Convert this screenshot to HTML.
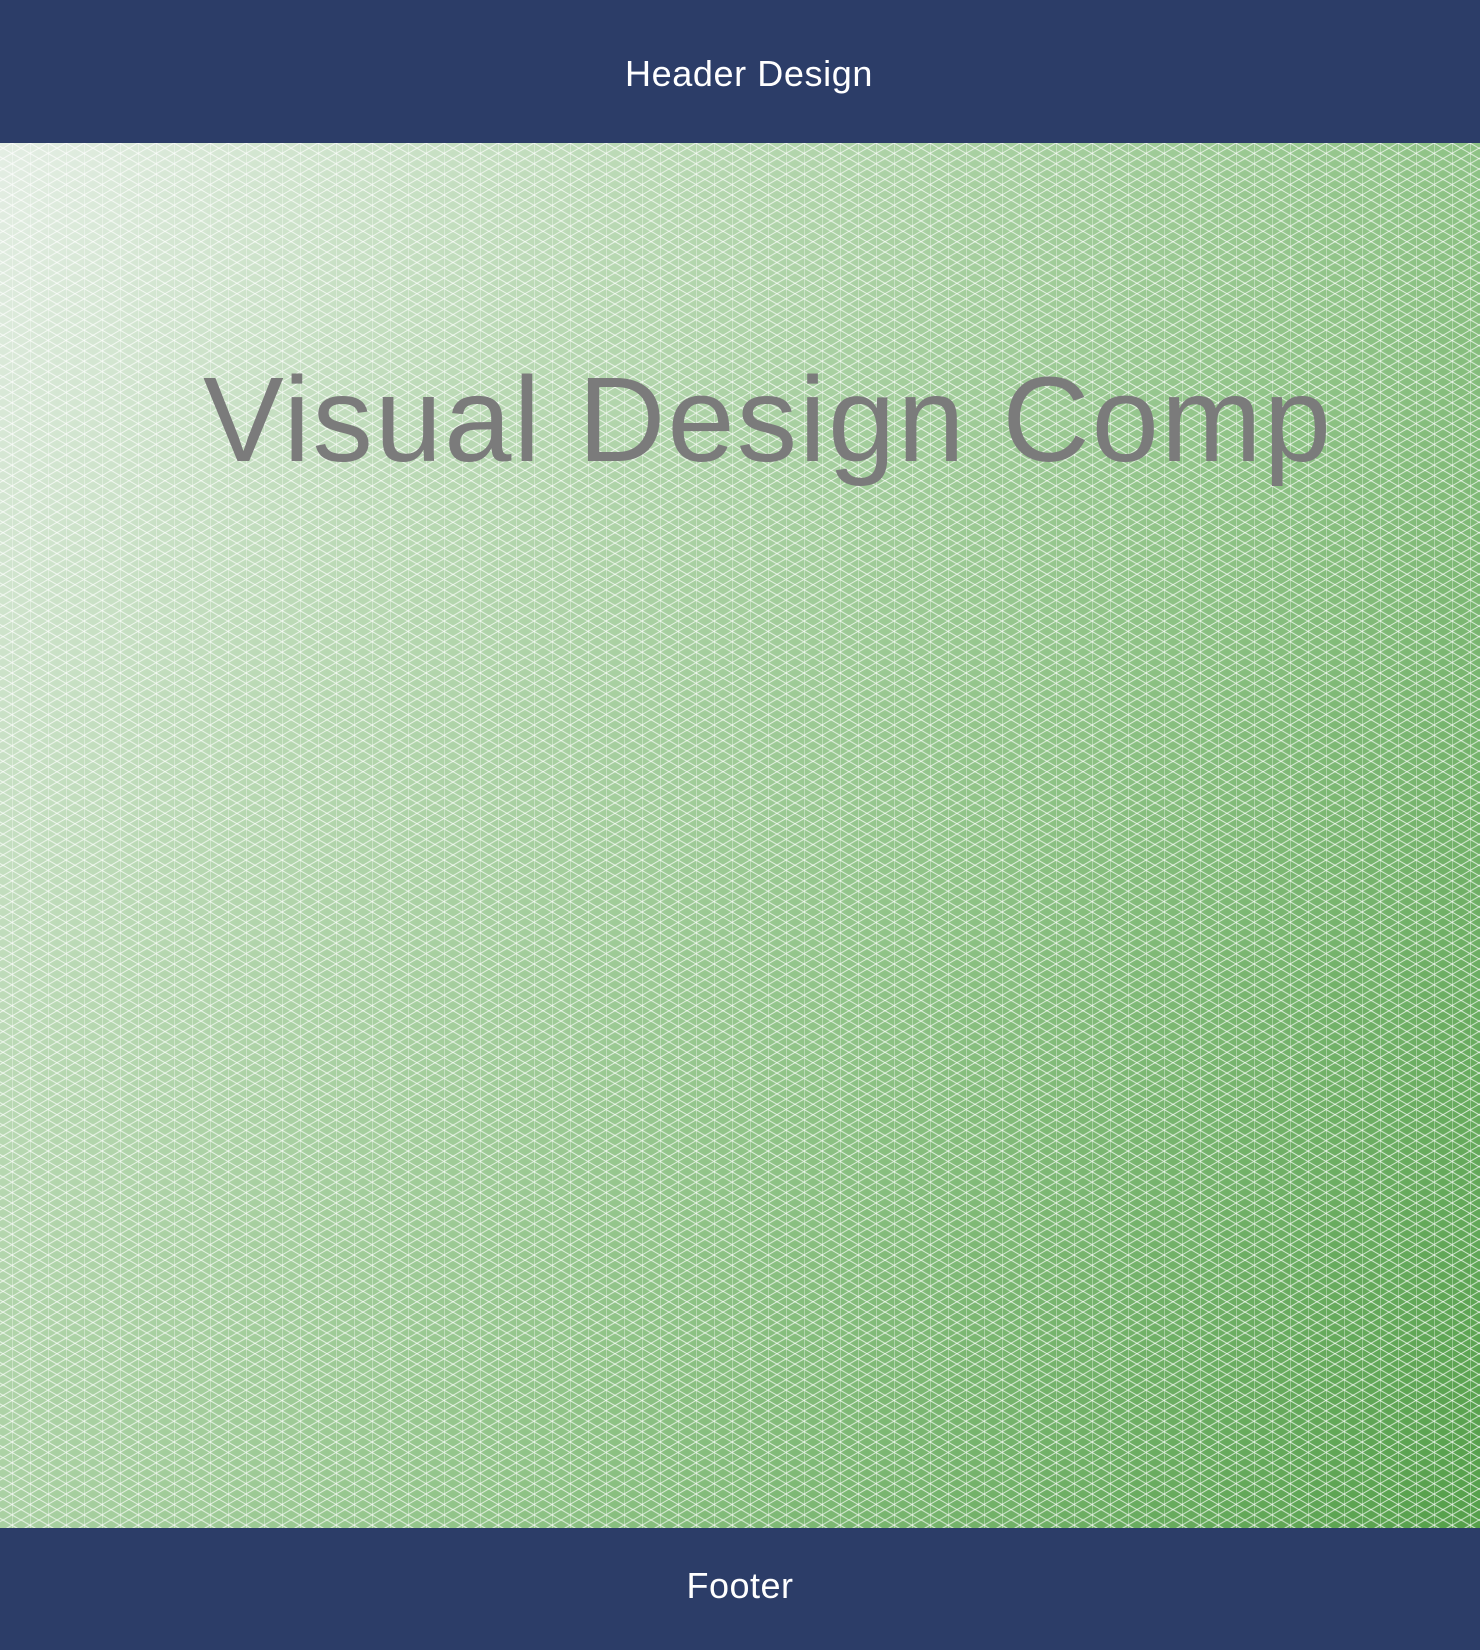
<!DOCTYPE html>
<html><head><meta charset="utf-8"><style>
html,body{margin:0;padding:0;width:1480px;height:1650px;overflow:hidden;font-family:"Liberation Sans",sans-serif}
.h{position:absolute;left:9px;top:0;width:1480px;height:143px;color:#fff;font-size:36px;text-align:center;line-height:148px;letter-spacing:0.6px}
.hb{position:absolute;left:0;top:0;width:1480px;height:143px;background:#2c3d68}
.m{position:absolute;left:0;top:143px;width:1480px;height:1385px;background:linear-gradient(125deg,#e4eee4 0%,#b8d8b2 28%,#8fc386 60%,#55a04a 100%)}
.m svg{position:absolute;left:0;top:0}
.t{position:absolute;left:28px;width:1480px;top:206px;text-align:center;font-size:121px;color:#7b7b7b;letter-spacing:2px}
.f{position:absolute;left:0;top:1528px;width:1480px;height:122px;background:#2c3d68;color:#fff;font-size:36px;text-align:center;line-height:116px;letter-spacing:0.5px}
</style></head><body>
<div class="hb"></div><div class="h">Header Design</div>
<div class="m">
<svg width="1480" height="1385"><defs><pattern id="p" width="18" height="20.785" patternUnits="userSpaceOnUse" x="12">
<g stroke="#fff" stroke-opacity="0.7" stroke-width="1" fill="none">
<line x1="0" y1="0" x2="0" y2="20.785"/>
<line x1="0" y1="0" x2="18" y2="10.392"/>
<line x1="0" y1="10.392" x2="18" y2="20.785"/>
<line x1="0" y1="10.392" x2="18" y2="0"/>
<line x1="0" y1="20.785" x2="18" y2="10.392"/>
</g></pattern></defs><rect width="1480" height="1385" fill="url(#p)"/></svg>
<div class="t">Visual Design Comp</div>
</div>
<div class="f">Footer</div>
</body></html>
